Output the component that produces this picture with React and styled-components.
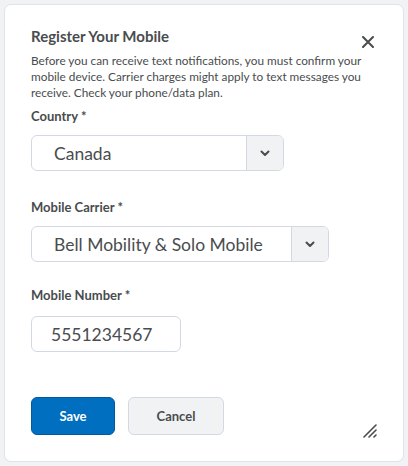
import React from 'react'
import styled, { createGlobalStyle } from 'styled-components'

const Global = createGlobalStyle`
  html, body {
    margin: 0;
    padding: 0;
    background: #f1f2f4;
    font-family: Lato, "Open Sans", sans-serif;
    color: #494c4e;
  }
`

const Page = styled.div`
  padding: 4px;
  width: 408px;
  height: 466px;
  box-sizing: border-box;
`

const Dialog = styled.div`
  position: relative;
  box-sizing: border-box;
  width: 400px;
  height: 458px;
  background: #ffffff;
  border: 1px solid #e0e3e7;
  border-radius: 7px;
  padding: 21px 26px 0 26px;
  display: flex;
  flex-direction: column;
`

const Header = styled.div`
  display: flex;
  justify-content: space-between;
  align-items: flex-start;
`

const Title = styled.h2`
  margin: 0;
  font-size: 15px;
  line-height: 20px;
  font-weight: 700;
  color: #494c4e;
`

const Close = styled.button`
  border: none;
  background: none;
  padding: 0;
  margin: 8px 1px 0 0;
  width: 16px;
  height: 16px;
  display: flex;
  align-items: center;
  justify-content: center;
  cursor: pointer;
`

const Description = styled.p`
  margin: 3px 0 0;
  font-size: 11.8px;
  line-height: 16px;
  color: #494c4e;
`

const Label = styled.label`
  display: block;
  margin-top: ${p => p.$top}px;
  font-size: 13px;
  line-height: 18px;
  font-weight: 700;
  color: #494c4e;
`

const SelectBox = styled.div`
  margin-top: 10px;
  width: ${p => p.$width}px;
  height: 36px;
  box-sizing: border-box;
  border: 1px solid #d3d9e3;
  border-radius: 6px;
  display: flex;
  overflow: hidden;
  background: #fff;
`

const SelectValue = styled.div`
  flex: 1;
  display: flex;
  align-items: center;
  padding-left: 22px;
  font-size: 17.5px;
  color: #494c4e;
`

const Chevron = styled.div`
  width: 36px;
  border-left: 1px solid #d3d9e3;
  background: #f1f2f4;
  display: flex;
  align-items: center;
  justify-content: center;
`

const Input = styled.div`
  margin-top: 12px;
  width: 150px;
  height: 36px;
  box-sizing: border-box;
  border: 1px solid #d3d9e3;
  border-radius: 6px;
  display: flex;
  align-items: center;
  padding-left: 19px;
  font-size: 17.5px;
  color: #494c4e;
`

const Footer = styled.div`
  margin-top: 45px;
  display: flex;
  gap: 13px;
`

const Button = styled.button`
  height: 38px;
  padding: 0;
  width: ${p => p.$width}px;
  border-radius: 6px;
  font-family: Lato, "Open Sans", sans-serif;
  font-size: 13px;
  font-weight: 700;
  cursor: pointer;
  border: 1px solid ${p => (p.$primary ? '#005a9c' : '#d3d9e3')};
  background: ${p => (p.$primary ? '#006fbf' : '#f1f2f4')};
  color: ${p => (p.$primary ? '#ffffff' : '#494c4e')};
`

const Grip = styled.div`
  position: absolute;
  right: 26px;
  bottom: 25px;
  width: 14px;
  height: 14px;
`

const ChevronIcon = () => (
  <svg width="10" height="7" viewBox="0 0 10 7">
    <path d="M1.5 1.5 L5 5 L8.5 1.5" fill="none" stroke="#494c4e" strokeWidth="2" strokeLinecap="round" strokeLinejoin="round" />
  </svg>
)

export default function App() {
  return (
    <Page>
      <Global />
      <Dialog>
        <Header>
          <Title>Register Your Mobile</Title>
          <Close aria-label="Close">
            <svg width="12" height="12" viewBox="0 0 12 12">
              <path d="M1 1 L11 11 M11 1 L1 11" stroke="#494c4e" strokeWidth="2" strokeLinecap="round" />
            </svg>
          </Close>
        </Header>
        <Description>
          Before you can receive text notifications, you must confirm your mobile device. Carrier charges might apply to text messages you receive. Check your phone/data plan.
        </Description>
        <Label $top={6}>Country *</Label>
        <SelectBox $width={253}>
          <SelectValue>Canada</SelectValue>
          <Chevron><ChevronIcon /></Chevron>
        </SelectBox>
        <Label $top={27}>Mobile Carrier *</Label>
        <SelectBox $width={298}>
          <SelectValue>Bell Mobility &amp; Solo Mobile</SelectValue>
          <Chevron><ChevronIcon /></Chevron>
        </SelectBox>
        <Label $top={24}>Mobile Number *</Label>
        <Input>5551234567</Input>
        <Footer>
          <Button $primary $width={84}>Save</Button>
          <Button $width={96}>Cancel</Button>
        </Footer>
        <Grip>
          <svg width="14" height="14" viewBox="0 0 14 14">
            <path d="M1 13 L13 1 M6 13 L13 6 M11 13 L13 11" stroke="#494c4e" strokeWidth="1.6" strokeLinecap="round" />
          </svg>
        </Grip>
      </Dialog>
    </Page>
  )
}
